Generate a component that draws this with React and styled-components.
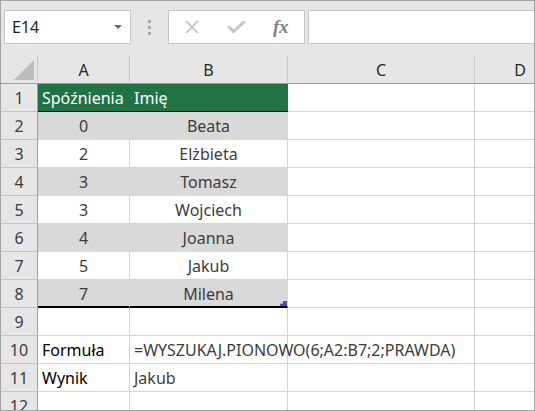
import React from 'react';
import styled, { createGlobalStyle } from 'styled-components';

const GlobalStyle = createGlobalStyle`
    body {
        margin: 0;
        font-family: 'Noto Sans', 'Open Sans', sans-serif;
    }
`

const rows = [
    { a: 'Spóźnienia', b: 'Imię', fill: 'head' },
    { a: '0', b: 'Beata', fill: 'gray' },
    { a: '2', b: 'Elżbieta' },
    { a: '3', b: 'Tomasz', fill: 'gray' },
    { a: '3', b: 'Wojciech' },
    { a: '4', b: 'Joanna', fill: 'gray' },
    { a: '5', b: 'Jakub' },
    { a: '7', b: 'Milena', fill: 'gray', last: true },
    { a: '', b: '' },
    { a: 'Formuła', b: '=WYSZUKAJ.PIONOWO(6;A2:B7;2;PRAWDA)', label: true },
    { a: 'Wynik', b: 'Jakub', label: true },
    { a: '', b: '' },
]

const App = () => {
    return (
        <Window>
            <GlobalStyle />
            <Toolbar>
                <NameBox>
                    <span>E14</span>
                    <Caret />
                </NameBox>
                <Grip>
                    <i /><i /><i />
                </Grip>
                <FormulaButtons>
                    <IconButton>
                        <svg width="16" height="16" viewBox="0 0 16 16">
                            <path d="M2 2 L14 14 M14 2 L2 14" stroke="#bdbdbd" strokeWidth="1.6" fill="none" />
                        </svg>
                    </IconButton>
                    <IconButton>
                        <svg width="19" height="14" viewBox="0 0 19 14">
                            <path d="M1.5 6.5 L6.5 11.5 L17.5 1.5" stroke="#c4c4c4" strokeWidth="3" fill="none" />
                        </svg>
                    </IconButton>
                    <IconButton>
                        <Fx>fx</Fx>
                    </IconButton>
                </FormulaButtons>
                <FormulaInput />
            </Toolbar>
            <Sheet>
                <Corner><Triangle /></Corner>
                <ColHead>A</ColHead>
                <ColHead>B</ColHead>
                <ColHead>C</ColHead>
                <ColHead $last>D</ColHead>
                {rows.map((r, i) => (
                    <React.Fragment key={i}>
                        <RowHead>{i + 1}</RowHead>
                        <Cell
                            $fill={r.fill}
                            $last={r.last}
                            $align={r.fill === 'head' || r.label ? 'left' : 'center'}
                            $label={r.label}
                        >
                            {r.a}
                        </Cell>
                        <Cell
                            $fill={r.fill}
                            $last={r.last}
                            $align={r.fill === 'head' || r.label ? 'left' : 'center'}
                            $overflow={r.label}
                        >
                            {r.b}
                            {r.last && <FillHandle />}
                        </Cell>
                        <Cell />
                        <Cell $end />
                    </React.Fragment>
                ))}
            </Sheet>
        </Window>
    )
}

const Window = styled.div`
    width: 535px;
    height: 411px;
    box-sizing: border-box;
    border: 1px solid #a3a3a3;
    background: #e6e6e6;
    overflow: hidden;
    display: flex;
    flex-direction: column;
`

const Toolbar = styled.div`
    height: 55px;
    flex: none;
    display: flex;
    align-items: flex-start;
    padding: 9px 0 0 3px;
    box-sizing: border-box;
`

const Box = styled.div`
    height: 34px;
    box-sizing: border-box;
    background: #fff;
    border: 1px solid #c6c6c6;
`

const NameBox = styled(Box)`
    width: 127px;
    display: flex;
    align-items: center;
    justify-content: space-between;
    padding: 0 8px 0 7px;
    font-size: 16px;
    color: #1e1e1e;
`

const Caret = styled.div`
    width: 0;
    height: 0;
    border-left: 4px solid transparent;
    border-right: 4px solid transparent;
    border-top: 4px solid #6b6b6b;
`

const Grip = styled.div`
    width: 37px;
    height: 34px;
    display: flex;
    flex-direction: column;
    align-items: center;
    justify-content: center;
    gap: 3px;
    i {
        display: block;
        width: 3px;
        height: 3px;
        background: #a8a8a8;
    }
`

const FormulaButtons = styled(Box)`
    width: 137px;
    display: flex;
`

const IconButton = styled.div`
    width: 45px;
    display: flex;
    align-items: center;
    justify-content: center;
`

const Fx = styled.span`
    font-family: 'Liberation Serif', serif;
    font-style: italic;
    font-weight: bold;
    font-size: 19px;
    color: #808080;
    letter-spacing: -0.5px;
    margin-left: -2px;
`

const FormulaInput = styled(Box)`
    flex: 1;
    margin-left: 3px;
    border-right: none;
`

const Sheet = styled.div`
    display: grid;
    grid-template-columns: 37px 92px 158px 187px 1fr;
    grid-auto-rows: 28px;
    font-size: 16px;
`

const Corner = styled.div`
    box-sizing: border-box;
    border-right: 1px solid #c8c8c8;
    border-bottom: 1px solid #9b9b9b;
    display: flex;
    align-items: flex-end;
    justify-content: flex-end;
    padding: 0 3px 3px 0;
`

const Triangle = styled.div`
    width: 20px;
    height: 20px;
    background: #bcbcbc;
    clip-path: polygon(100% 0, 100% 100%, 0 100%);
`

const ColHead = styled.div`
    box-sizing: border-box;
    border-right: ${p => (p.$last ? 'none' : '1px solid #c8c8c8')};
    border-bottom: 1px solid #9b9b9b;
    display: flex;
    align-items: flex-end;
    justify-content: ${p => (p.$last ? 'flex-end' : 'center')};
    padding: 0 ${p => (p.$last ? '8px' : '0')} 2px 0;
    color: #262626;
`

const RowHead = styled.div`
    box-sizing: border-box;
    border-right: 1px solid #9e9e9e;
    border-bottom: 1px solid #c4c4c4;
    display: flex;
    align-items: flex-end;
    justify-content: center;
    padding-bottom: 2px;
    color: #3a3a3a;
`

const fills = {
    head: '#217346',
    gray: '#d9d9d9',
}

const Cell = styled.div`
    position: relative;
    box-sizing: border-box;
    background: ${p => fills[p.$fill] || '#fff'};
    border-right: ${p => (p.$end ? 'none' : `1px solid ${fills[p.$fill] || '#d4d4d4'}`)};
    border-bottom: ${p =>
        p.$last ? '2px solid #000' : p.$fill === 'head' ? '1px solid #000' : `1px solid ${fills[p.$fill] || '#d4d4d4'}`};
    display: flex;
    align-items: flex-end;
    justify-content: ${p => (p.$align === 'left' ? 'flex-start' : 'center')};
    padding: 0 4px ${p => (p.$last ? '1px' : '2px')} 4px;
    color: ${p => (p.$fill === 'head' ? '#fff' : p.$label ? '#000' : '#3c3c3c')};
    white-space: nowrap;
    overflow: ${p => (p.$overflow ? 'visible' : 'hidden')};
    z-index: ${p => (p.$overflow ? 1 : 0)};
`

const FillHandle = styled.div`
    position: absolute;
    right: 0;
    bottom: -2px;
    width: 7px;
    height: 7px;
    background: #4457b9;
    clip-path: polygon(40% 0, 100% 0, 100% 100%, 0 100%, 0 40%, 40% 40%);
`

export default App
